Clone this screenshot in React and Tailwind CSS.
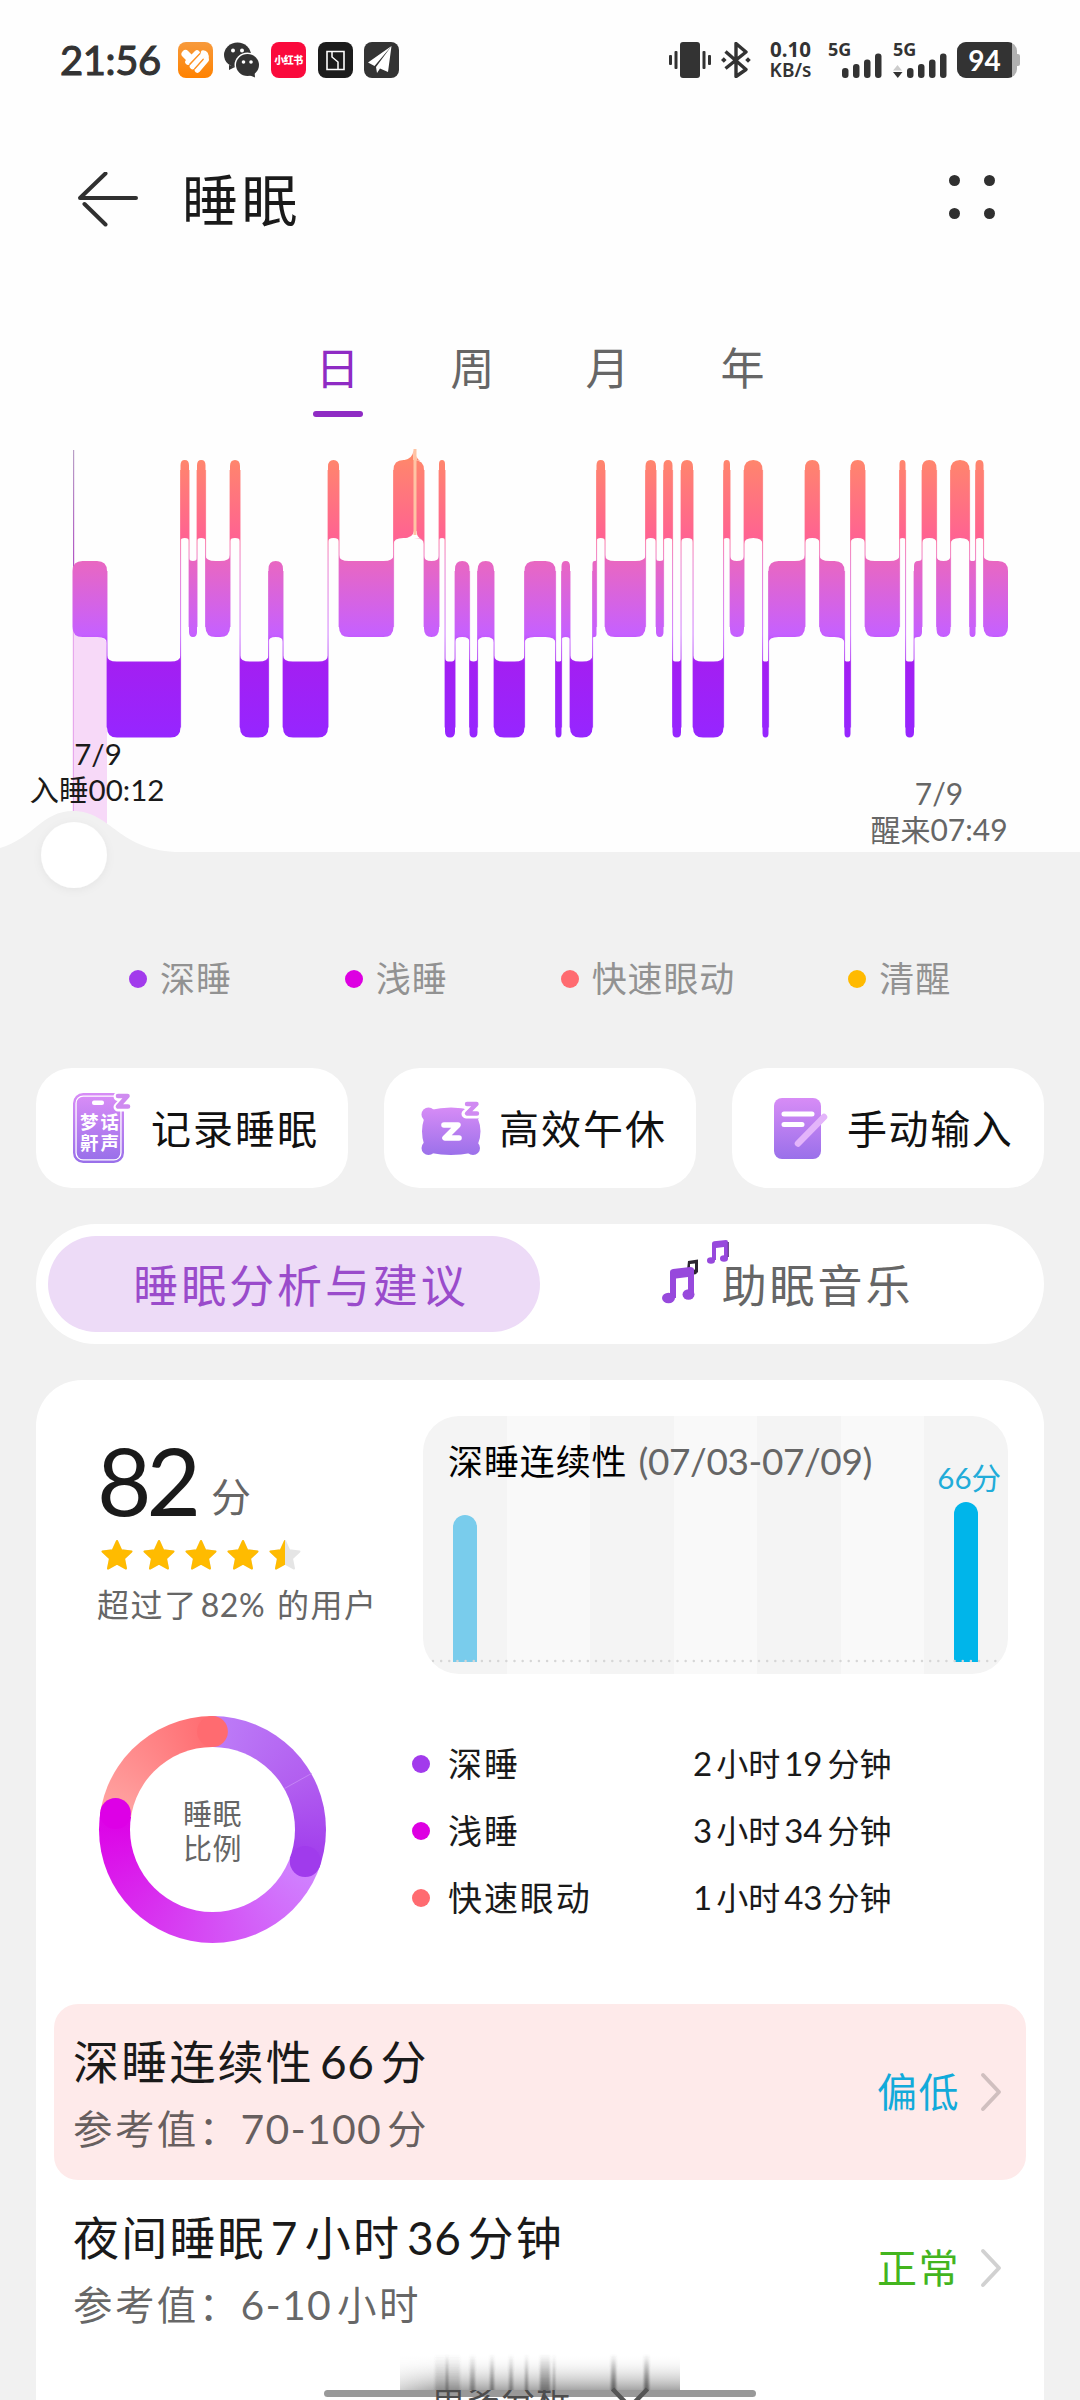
import React, { useState } from 'react';

const STAGES = {
  rem: { top: 460, bottom: 538, level: 2 },
  light: { top: 561, bottom: 637, level: 1 },
  deep: { top: 661.5, bottom: 737.5, level: 0 },
};

// [stage, end x], every block starts where the previous one ends
const SLEEP = [
  ['light', 107], ['deep', 180.5], ['rem', 189], ['light', 197], ['rem', 205.5],
  ['light', 230], ['rem', 240], ['deep', 268.5], ['light', 283], ['deep', 328],
  ['rem', 339], ['light', 393.5], ['rem', 424], ['light', 439], ['rem', 445],
  ['deep', 455], ['light', 469.5], ['deep', 477.5], ['light', 494], ['deep', 524.5],
  ['light', 555.5], ['deep', 561.5], ['light', 570], ['deep', 592.5], ['light', 596.5],
  ['rem', 605], ['light', 645.5], ['rem', 656], ['light', 663.5], ['rem', 672.5],
  ['deep', 681], ['rem', 693], ['deep', 723.5], ['rem', 730], ['light', 744],
  ['rem', 762.5], ['deep', 768.5], ['light', 805], ['rem', 819.5], ['light', 844.5],
  ['deep', 850.5], ['rem', 865], ['light', 899.5], ['rem', 905.5], ['deep', 914],
  ['light', 922], ['rem', 936.5], ['light', 950.5], ['rem', 969.5], ['light', 975.5],
  ['rem', 983.5], ['light', 1008],
];

const BLOCKS = SLEEP.map(([stage, x1], i) => ({
  stage,
  x0: i === 0 ? 72.5 : SLEEP[i - 1][1],
  x1,
  prev: i === 0 ? null : SLEEP[i - 1][0],
  next: i === SLEEP.length - 1 ? null : SLEEP[i + 1][0],
}));

function blockPath({ stage, x0, x1, prev, next }) {
  const { top, bottom, level } = STAGES[stage];
  const rx = Math.min(10, (x1 - x0) / 2);
  const ry = Math.min(10, (x1 - x0) / 2 + 1);
  const flare = Math.min(6, (x1 - x0) / 3);
  const side = (other) => (other ? Math.sign(STAGES[other].level - level) : 0);
  const l = side(prev);
  const r = side(next);
  const tl = l > 0 ? top - flare : top + ry;
  const tr = r > 0 ? top - flare : top + ry;
  const bl = l < 0 ? bottom + flare : bottom - ry;
  const br = r < 0 ? bottom + flare : bottom - ry;
  return `M${x0} ${tl}Q${x0} ${top} ${x0 + rx} ${top}H${x1 - rx}Q${x1} ${top} ${x1} ${tr}V${br}Q${x1} ${bottom} ${x1 - rx} ${bottom}H${x0 + rx}Q${x0} ${bottom} ${x0} ${bl}Z`;
}

const LEGEND = [
  { name: '深睡', dot: 'bg-[#a23bec]' },
  { name: '浅睡', dot: 'bg-[#dd00e2]' },
  { name: '快速眼动', dot: 'bg-[#ff6b70]' },
  { name: '清醒', dot: 'bg-[#ffba00]' },
];

const DURATIONS = [
  { name: '深睡', dot: 'bg-[#a23bec]', hours: 2, minutes: 19 },
  { name: '浅睡', dot: 'bg-[#dd00e2]', hours: 3, minutes: 34 },
  { name: '快速眼动', dot: 'bg-[#ff6b70]', hours: 1, minutes: 43 },
];

function SignalBars() {
  return (
    <g fill="#333">
      <rect x="14" y="26" width="6.5" height="10" rx="3" />
      <rect x="25" y="22" width="6.5" height="14" rx="3" />
      <rect x="36" y="17.5" width="6.5" height="18.5" rx="3" />
      <rect x="47" y="11.5" width="6.5" height="24.5" rx="3" />
    </g>
  );
}

function StatusBar() {
  return (
    <div className="flex h-[120px] items-center justify-between pl-[60px] pr-[60px] text-[#333]">
      <div className="flex items-center gap-[11.7px]">
        <span className="mr-[4px] w-[102px] text-[40px] leading-none tracking-[-0.4px] whitespace-nowrap [-webkit-text-stroke:1.1px_#333]">21:56</span>
        <svg width="35" height="36" viewBox="0 0 35 36">
          <defs>
            <linearGradient id="app" x1="0" y1="0" x2="0" y2="1">
              <stop offset="0" stopColor="#f79a3c" />
              <stop offset="1" stopColor="#ff8200" />
            </linearGradient>
          </defs>
          <rect width="35" height="36" rx="8" fill="url(#app)" />
          <g stroke="#fff" strokeWidth="5.6" strokeLinecap="round" strokeLinejoin="round" fill="none">
            <path d="M7.500 12L11 15.500" strokeWidth="8" />
            <path d="M10 20L19 11" />
            <path d="M14.500 24.500L25 13" />
            <path d="M19.500 28L28 18" />
            <path d="M25 10.500Q29 11 28.500 17" strokeWidth="4.500" />
          </g>
          <path d="M11.500 22.500L22 11.500M16.500 27L25.500 17" stroke="#ff9020" strokeWidth="1.300" />
        </svg>
        <svg width="35" height="36" viewBox="0 0 35 36">
          <path d="M5 23l0 5 6-3z" fill="#333" />
          <ellipse cx="13.500" cy="13" rx="13.500" ry="12.500" fill="#333" />
          <circle cx="9" cy="8.500" r="2" fill="#fff" />
          <circle cx="18" cy="8.500" r="2" fill="#fff" />
          <ellipse cx="23.500" cy="23" rx="13" ry="12.500" fill="#fff" />
          <ellipse cx="23.500" cy="23" rx="11.500" ry="11" fill="#333" />
          <path d="M25 33l6 2.500-.5-6z" fill="#333" />
          <circle cx="19.500" cy="20" r="1.800" fill="#fff" />
          <circle cx="27" cy="20" r="1.800" fill="#fff" />
        </svg>
        <div className="flex h-[36px] w-[35px] items-center justify-center rounded-[8px] bg-[#fa0a3c]">
          <span className="text-[10px] leading-none font-black tracking-[-0.5px] whitespace-nowrap text-white">小红书</span>
        </div>
        <svg width="35" height="36" viewBox="0 0 35 36" fill="none">
          <rect width="35" height="36" rx="8" fill="#1c1c1c" />
          <path d="M9 9.500h17v18H9z" stroke="#fff" strokeWidth="1.600" />
          <path d="M14 9.500v5.500l6 5v7.500" stroke="#fff" strokeWidth="1.500" />
        </svg>
        <svg width="35" height="36" viewBox="0 0 35 36">
          <rect width="35" height="36" rx="8" fill="#333" />
          <path d="M27.500 4L4 20.500l6.500 3.500zM27.500 4L12 25l1 6 3-4.500 8 3.500z" fill="#fff" />
        </svg>
      </div>

      <div className="flex items-center">
        <svg width="42" height="36" viewBox="0 0 42 36" fill="#333">
          <rect x="11" width="20" height="36" rx="3" />
          <rect x="5.500" y="9" width="3" height="18" rx="1" />
          <rect y="13" width="3" height="10" rx="1" />
          <rect x="33.500" y="9" width="3" height="18" rx="1" />
          <rect x="39" y="13" width="3" height="10" rx="1" />
        </svg>
        <svg className="ml-[10px]" width="30" height="36" viewBox="0 0 30 36" fill="none" stroke="#333" strokeWidth="3.400">
          <path d="M4.500 9.500L25 27.500 15 34.500V1.500L25 10 4.500 26.500" strokeLinejoin="round" />
          <path d="M2.800 15.200l2.800 2.800-2.800 2.800-2.800-2.800zM27 15.200l2.800 2.800-2.800 2.800-2.800-2.800z" fill="#333" stroke="none" />
        </svg>
        <div className="ml-[18px] flex w-[43px] flex-col items-center [font-family:'Noto_Sans',sans-serif]">
          <span className="text-[20.5px] leading-[21px] font-bold">0.10</span>
          <span className="text-[19px] leading-[21px] font-semibold">KB/s</span>
        </div>
        <div className="relative ml-[16px] h-[36px] w-[54px]">
          <svg width="54" height="36" viewBox="0 0 54 36"><SignalBars /></svg>
          <span className="absolute -top-[2px] left-0 text-[18px] leading-[18px] font-bold [font-family:'Noto_Sans',sans-serif]">5G</span>
        </div>
        <div className="relative ml-[11px] h-[36px] w-[54px]">
          <svg width="54" height="36" viewBox="0 0 54 36">
            <SignalBars />
            <path d="M4.500 23l4.500 5.500h-9z" fill="#ccc" />
            <path d="M0 30h9.500l-4.700 6z" fill="#333" />
          </svg>
          <span className="absolute -top-[2px] left-0 text-[18px] leading-[18px] font-bold [font-family:'Noto_Sans',sans-serif]">5G</span>
        </div>
        <div className="ml-[10px] flex items-center">
          <div className="flex h-[36px] w-[60px] overflow-hidden rounded-[9px] bg-[#b0b0b0]">
            <span className="w-[55px] bg-[#333] text-center text-[28px] leading-[36px] font-bold text-white">94</span>
          </div>
          <div className="h-[12px] w-[3px] rounded-r-[2px] bg-[#b0b0b0]" />
        </div>
      </div>
    </div>
  );
}

function Header() {
  return (
    <div className="flex h-[160px] items-center pl-[77px] pr-[85px]">
      <svg width="62" height="56" viewBox="0 0 62 56" fill="none" stroke="#303030" strokeWidth="4" strokeLinecap="round" strokeLinejoin="round">
        <path d="M59 26H3L28.500 1.500M7.500 32L28.500 52.500" />
      </svg>
      <h1 className="ml-[43px] text-[56px] leading-none tracking-[3.500px] text-[#1a1a1a]">睡眠</h1>
      <div className="ml-auto grid grid-cols-2 gap-x-[24px] gap-y-[22px] pb-[6px]">
        {[0, 1, 2, 3].map((n) => (
          <i key={n} className="size-[11px] rounded-full bg-[#303030]" />
        ))}
      </div>
    </div>
  );
}

function PeriodTabs() {
  const [active, setActive] = useState('日');
  return (
    <div className="flex h-[160px] justify-center pt-[63px]">
      {['日', '周', '月', '年'].map((tab) => (
        <button
          key={tab}
          onClick={() => setActive(tab)}
          className={`flex w-[135px] flex-col items-center text-[44px] leading-[50px] ${active === tab ? 'text-[#8f2bc4]' : 'text-[#666]'}`}
        >
          {tab}
          {active === tab && <i className="mt-[18px] h-[6px] w-[50px] rounded-full bg-[#8f2bc4]" />}
        </button>
      ))}
    </div>
  );
}

function SleepChart() {
  return (
    <div className="relative h-[460px]">
      <svg width="1080" height="460" viewBox="0 440 1080 460">
        <defs>
          <linearGradient id="stage" gradientUnits="userSpaceOnUse" x1="0" y1="450" x2="0" y2="738">
            <stop offset="0" stopColor="#ff8a68" />
            <stop offset="0.300" stopColor="#ff6391" />
            <stop offset="0.390" stopColor="#e867c2" />
            <stop offset="0.640" stopColor="#c660ff" />
            <stop offset="0.740" stopColor="#a31ff2" />
            <stop offset="1" stopColor="#9626ff" />
          </linearGradient>
          <linearGradient id="cursor" x1="0" y1="0" x2="0" y2="1">
            <stop offset="0" stopColor="#b9a0c6" />
            <stop offset="1" stopColor="#b04fc4" />
          </linearGradient>
          <filter id="knob" x="-30%" y="-30%" width="160%" height="160%">
            <feDropShadow dx="0" dy="2" stdDeviation="4" floodOpacity="0.050" />
          </filter>
        </defs>
        <path d="M72.500 628L82 637H96q11 0 11 8v200H72.500z" fill="#f7d9f8" />
        <rect x="73" y="450" width="1.200" height="120" fill="url(#cursor)" />
        <rect x="73" y="630" width="1" height="190" fill="#e6a8ec" />
        {BLOCKS.map((b) => (
          <path key={b.x0} d={blockPath(b)} fill="url(#stage)" />
        ))}
        {BLOCKS.slice(1).map((b) => {
          const top = Math.min(STAGES[b.stage].top, STAGES[b.prev].top) + 10;
          const bottom = Math.max(STAGES[b.stage].bottom, STAGES[b.prev].bottom) - 10;
          return <rect key={b.x0} x={b.x0 - 0.5} y={top} width="1.100" height={bottom - top} fill="url(#stage)" opacity="0.750" />;
        })}
        {/* short wake-up inside a REM block */}
        <path d="M403 460.500Q413 459 413.500 450V461zM416.500 456q1 4 4 4.500h-4z" fill="#ff8668" />
        <path d="M403 538.500Q413 538 414 531H416.500Q417 538 421 538.500z" fill="#fff" />
        <rect x="413.500" y="449" width="3" height="86" fill="#ffc4a4" />
        <path d="M0 848C34 838 42 811 73 811C112 811 118 852 181 852H1080V900H0z" fill="#f1f1f1" />
        <circle cx="74" cy="855" r="33" fill="#fff" filter="url(#knob)" />
      </svg>
      <div className="absolute left-[31px] top-[296px] w-[134px] text-center text-[29.5px] leading-[36px] whitespace-nowrap text-[#1a1a1a]">
        <p>7/9</p>
        <p className="-ml-[2px]">入睡00:12</p>
      </div>
      <div className="absolute left-[869px] top-[335px] w-[140px] text-center text-[30px] leading-[36px] whitespace-nowrap text-[#666]">
        <p>7/9</p>
        <p>醒来07:49</p>
      </div>
    </div>
  );
}

function Legend() {
  return (
    <div className="flex h-[168px] items-center gap-[113px] pb-[11px] pl-[129px]">
      {LEGEND.map((item) => (
        <div key={item.name} className="flex items-center gap-[13px] text-[35px] leading-none tracking-[0.900px] whitespace-nowrap text-[#929292]">
          <i className={`size-[18px] rounded-full ${item.dot}`} />
          {item.name}
        </div>
      ))}
    </div>
  );
}

function PurpleFade({ id }) {
  return (
    <linearGradient id={id} x1="0" y1="0" x2="0" y2="1">
      <stop offset="0" stopColor="#d78cf6" />
      <stop offset="1" stopColor="#9a70ea" />
    </linearGradient>
  );
}

function RecordIcon() {
  return (
    <div className="relative h-[70px] w-[58px]">
      <svg width="58" height="70" viewBox="0 0 58 70" fill="none">
        <defs><PurpleFade id="rec" /></defs>
        <rect x="1.200" y="1.200" width="48.600" height="67.600" rx="9" fill="#fff" stroke="url(#rec)" strokeWidth="2.400" />
        <rect x="3.700" y="3.700" width="43.600" height="62.600" rx="6.500" fill="url(#rec)" />
        <rect x="19" y="7.500" width="12" height="4.500" rx="2" fill="#fff" />
        <path d="M45 3.500h10L45 14h10" stroke="#fff" strokeWidth="9" strokeLinejoin="round" strokeLinecap="round" />
        <path d="M45 3h9.500L45 13.500h10" stroke="#cf8bf0" strokeWidth="4.600" strokeLinejoin="round" strokeLinecap="round" />
      </svg>
      <div className="absolute left-[7px] top-[19px] w-[40px] text-[18.5px] leading-[21px] font-bold text-white">
        <p>梦话</p>
        <p>鼾声</p>
      </div>
    </div>
  );
}

function NapIcon() {
  return (
    <svg width="61" height="55" viewBox="0 0 61 55" fill="none">
      <defs>
        <linearGradient id="nap" gradientUnits="userSpaceOnUse" x1="0" y1="6" x2="0" y2="55">
          <stop offset="0" stopColor="#d78cf6" />
          <stop offset="1" stopColor="#9a70ea" />
        </linearGradient>
      </defs>
      <g fill="url(#nap)">
        <circle cx="7.500" cy="13.500" r="7" />
        <circle cx="52" cy="13.500" r="7" />
        <circle cx="7.500" cy="47" r="7" />
        <circle cx="52" cy="47" r="7" />
        <path d="M9 9Q30 4 51 9Q55 11 57 18Q62 30 57 43Q55 50 50 52Q30 56 10 52Q5 50 3 43Q-1 30 3 18Q5 11 9 9z" />
      </g>
      <path d="M23 24h14L24 37h14" stroke="#fff" strokeWidth="5.600" strokeLinejoin="round" strokeLinecap="round" />
      <path d="M46 4h10L45 13h11" stroke="#fff" strokeWidth="9" strokeLinejoin="round" strokeLinecap="round" />
      <path d="M46 3h9.500L46 12.500h10" stroke="#d08af2" strokeWidth="4.400" strokeLinejoin="round" strokeLinecap="round" />
    </svg>
  );
}

function NoteIcon() {
  return (
    <svg width="54" height="61" viewBox="0 0 54 61" fill="none">
      <defs><PurpleFade id="note" /></defs>
      <rect width="47" height="61" rx="8" fill="url(#note)" />
      <path d="M10 16h28M10 26.500h18" stroke="#fff" strokeWidth="5" strokeLinecap="round" />
      <path d="M24 45.500L50 19" stroke="#e3b4fa" strokeWidth="6.500" strokeLinecap="round" />
    </svg>
  );
}

function ActionButtons() {
  return (
    <div className="mx-[36px] grid grid-cols-3 gap-[36px] text-[40px] leading-none tracking-[2px] whitespace-nowrap text-[#111]">
      <button className="flex h-[120px] items-center rounded-[36px] bg-white pl-[37px]">
        <RecordIcon />
        <span className="ml-[20px] pt-[2px]">记录睡眠</span>
      </button>
      <button className="flex h-[120px] items-center rounded-[36px] bg-white pl-[37px]">
        <NapIcon />
        <span className="ml-[17px] pt-[2px]">高效午休</span>
      </button>
      <button className="flex h-[120px] items-center rounded-[36px] bg-white pl-[42px]">
        <NoteIcon />
        <span className="ml-[19px] pt-[2px] tracking-[1.6px]">手动输入</span>
      </button>
    </div>
  );
}

function MusicIcon() {
  return (
    <svg className="-mr-[8px] mb-[26px]" width="68" height="66" viewBox="0 0 68 66">
      <path d="M26 21l10-1.500v13h-3v-9l-5 .5v6h-3z" fill="#2b2530" />
      <ellipse cx="32" cy="32" rx="3" ry="2.500" fill="#2b2530" />
      <g fill="#9749dc">
        <path d="M8 32Q8 29.500 11 29L28 27Q32 27 32 30V54H26V37L14 38.500V58H8z" />
        <ellipse cx="6.500" cy="58" rx="6.500" ry="5.200" />
        <ellipse cx="26.500" cy="54.500" rx="6" ry="5.200" />
        <path d="M50 3.500Q50 1.500 52 1.200L64 0Q66 0 66 2V18H62V7L54 8V20H50z" />
        <ellipse cx="49" cy="20.500" rx="4" ry="3.300" />
        <ellipse cx="62" cy="18.500" rx="4" ry="3.300" />
      </g>
      <path d="M66.300 2V17" stroke="#4a2370" strokeWidth="1" />
    </svg>
  );
}

function Segmented() {
  return (
    <div className="mx-[36px] mt-[36px] flex h-[120px] shrink-0 rounded-full bg-white p-[12px] text-[45px] leading-none tracking-[2.9px] whitespace-nowrap">
      <button className="flex w-[492px] items-center justify-center rounded-full bg-[#eddbf7] pl-[14px] pt-[4px] text-[#9a4bcb]">睡眠分析与建议</button>
      <button className="flex flex-1 items-center justify-center pl-[3px] pt-[4px] text-[#666]">
        <MusicIcon />
        助眠音乐
      </button>
    </div>
  );
}

const STAR = 'M16 2L20.300 11.300 30.500 12.500 23 19.500 25 29.500 16 24.600 7 29.500 9 19.500 1.500 12.500 11.700 11.300z';

function Stars() {
  return (
    <div className="mt-[17px] ml-[4px] flex gap-[10px]">
      {[1, 1, 1, 1, 0.5].map((fill, i) => (
        <svg key={i} width="32" height="32" viewBox="0 0 32 32" strokeLinejoin="round" strokeWidth="2">
          <defs>
            <clipPath id={`star${i}`}><rect width={32 * fill} height="32" /></clipPath>
          </defs>
          <path d={STAR} fill="#e5e5e5" stroke="#e5e5e5" />
          <path d={STAR} fill="#ffbb00" stroke="#ffbb00" clipPath={`url(#star${i})`} />
        </svg>
      ))}
    </div>
  );
}

function ContinuityChart() {
  return (
    <div className="relative h-[258px] w-[585px] overflow-hidden rounded-[36px]">
      <div className="grid h-full grid-cols-7">
        {[0, 1, 2, 3, 4, 5, 6].map((day) => (
          <div key={day} className={`flex items-end justify-center pb-[12px] ${day % 2 ? 'bg-[#f9f9f9]' : 'bg-[#f4f4f4]'}`}>
            {day === 0 && <i className="h-[147px] w-[24px] rounded-t-full bg-[#79ccec]" />}
            {day === 6 && <i className="h-[160px] w-[24px] rounded-t-full bg-[#00b5ea]" />}
          </div>
        ))}
      </div>
      <svg className="absolute left-[8px] top-[243px]" width="570" height="4">
        <path d="M2 2H568" stroke="#d6d6d6" strokeWidth="2.500" strokeDasharray="0 8.150" strokeLinecap="round" />
      </svg>
      <p className="absolute left-[25px] top-[24px] text-[35px] leading-[42px] tracking-[0.900px] whitespace-nowrap text-black">
        深睡连续性
        <span className="ml-[11px] text-[37px] tracking-[-0.400px] text-[#666]">(07/03-07/09)</span>
      </p>
      <span className="absolute right-[7px] top-[45px] text-[29.500px] leading-[34px] text-[#22acd9]">66分</span>
    </div>
  );
}

function Donut() {
  return (
    <div className="relative flex size-[227px] items-center justify-center rounded-full bg-[conic-gradient(#bd7df8_0deg,#b25ff0_60deg,#a03bec_110deg,#cf85ff_110deg,#dd00e6_279deg,#ffa5a3_279deg,#ff6b70_360deg)]">
      <svg className="absolute inset-0" width="227" height="227" viewBox="-113.500 -113.500 227 227">
        <circle cx="0" cy="-98" r="15.400" fill="#ff6b70" />
        <circle cx="92.700" cy="32" r="15.400" fill="#a03bec" />
        <circle cx="-97" cy="-16" r="15.400" fill="#dd00e6" />
        <path d="M72 -41L99 -56" stroke="#c583f5" strokeWidth="1" />
      </svg>
      <div className="z-10 flex size-[165px] flex-col items-center justify-center rounded-full bg-white pt-[2px] text-[29px] leading-[35px] tracking-[0.500px] text-[#666]">
        <span>睡眠</span>
        <span>比例</span>
      </div>
    </div>
  );
}

function Chevron() {
  return (
    <svg width="22" height="40" viewBox="0 0 22 40" fill="none" stroke="#000" strokeOpacity="0.180" strokeWidth="4" strokeLinecap="round" strokeLinejoin="round">
      <path d="M3 3L19 20 3 37" />
    </svg>
  );
}

function MetricRow({ title, range, status, tone, highlight }) {
  return (
    <div className={`mx-[18px] flex h-[176px] items-center rounded-[24px] pl-[19px] pr-[24px] ${highlight ? 'bg-[#feeaea]' : ''}`}>
      <div className="pt-[6px] whitespace-nowrap">
        <p className="text-[46px] leading-[60px] tracking-[2.200px] text-[#1a1a1a]">{title}</p>
        <p className="mt-[7px] text-[39.500px] leading-[60px] tracking-[2.400px] text-black/60">{range}</p>
      </div>
      <span className={`ml-auto mr-[20px] text-[40px] leading-none tracking-[1.5px] ${tone}`}>{status}</span>
      <Chevron />
    </div>
  );
}

function Num({ children, className = 'mx-[6px] tracking-[0.500px]' }) {
  return <span className={className}>{children}</span>;
}

function ReportCard() {
  return (
    <div className="mx-[36px] mt-[36px] h-[1020px] shrink-0 rounded-t-[46px] bg-white pt-[36px]">
      <div className="flex pl-[61px] pr-[36px]">
        <div className="w-[326px] pt-[22px]">
          <p className="flex h-[84px] items-end text-[#1a1a1a]">
            <span className="text-[94px] leading-[84px] tracking-[-5px]">82</span>
            <span className="mb-[5px] ml-[15px] text-[40px] leading-[40px] text-[#666]">分</span>
          </p>
          <Stars />
          <p className="mt-[14px] text-[32px] leading-[40px] tracking-[1.600px] whitespace-nowrap text-[#666]">
            超过了<Num className="mr-[2px] ml-[3px] tracking-[0.500px]">82%</Num> 的用户
          </p>
        </div>
        <ContinuityChart />
      </div>

      <div className="mt-[42px] flex items-center pl-[63px]">
        <Donut />
        <div className="ml-[86px] flex flex-col pt-[2px] text-[34px] leading-[66px] text-[#1a1a1a]">
          {DURATIONS.map((d) => (
            <div key={d.name} className="flex items-center whitespace-nowrap">
              <i className={`size-[18px] rounded-full ${d.dot}`} />
              <span className="ml-[18px] w-[245px] tracking-[1.900px]">{d.name}</span>
              <span className="text-[33px]">
                {d.hours}
                <span className="mr-[4px] ml-[4px] text-[32px]">小时</span>
                {d.minutes}
                <span className="ml-[5px] text-[32px]">分钟</span>
              </span>
            </div>
          ))}
        </div>
      </div>

      <div className="mt-[61px]">
        <MetricRow
          highlight
          title={<>深睡连续性<Num>66</Num>分</>}
          range={<>参考值：<Num className="mr-[5px] text-[41px] tracking-[1.200px]">70-100</Num>分</>}
          status="偏低"
          tone="text-[#12aada]"
        />
        <MetricRow
          title={<>夜间睡眠<Num className="mx-[5px]">7</Num>小时<Num>36</Num>分钟</>}
          range={<>参考值：<Num className="mr-[5px] text-[41px] tracking-[1.200px]">6-10</Num>小时</>}
          status="正常"
          tone="text-[#43b51e]"
        />
      </div>
    </div>
  );
}

// System gesture bar with the content that fades out under it
function GestureBar() {
  return (
    <div className="absolute bottom-0 left-[324px] h-[46px] w-[432px] overflow-hidden">
      <svg className="absolute inset-0" width="432" height="46" viewBox="324 2354 432 46">
        <defs>
          <linearGradient id="veil" x1="0" y1="0" x2="0" y2="1">
            <stop offset="0" stopColor="#fff" stopOpacity="0" />
            <stop offset="1" stopColor="#a0a0a0" />
          </linearGradient>
          <linearGradient id="streak" x1="0" y1="0" x2="0" y2="1">
            <stop offset="0" stopColor="#555" stopOpacity="0" />
            <stop offset="1" stopColor="#555" stopOpacity="0.850" />
          </linearGradient>
          <linearGradient id="edge" x1="0" y1="0" x2="1" y2="0">
            <stop offset="0" stopColor="#fff" stopOpacity="0.500" />
            <stop offset="1" stopColor="#fff" stopOpacity="0" />
          </linearGradient>
          <filter id="soft"><feGaussianBlur stdDeviation="1 0" /></filter>
        </defs>
        <rect x="400" y="2354" width="280" height="37" fill="url(#veil)" />
        <rect x="400" y="2354" width="40" height="37" fill="url(#edge)" />
        <g fill="url(#streak)" filter="url(#soft)">
          <rect x="435" y="2354" width="25" height="37" opacity="0.350" />
          <rect x="446" y="2354" width="2" height="37" />
          <rect x="470" y="2354" width="5" height="37" opacity="0.700" />
          <rect x="490" y="2354" width="4" height="37" opacity="0.800" />
          <rect x="509" y="2354" width="4" height="37" opacity="0.700" />
          <rect x="525" y="2354" width="3" height="37" opacity="0.800" />
          <rect x="540" y="2354" width="10" height="37" opacity="0.800" />
          <rect x="553" y="2354" width="2" height="37" opacity="0.800" />
          <rect x="611" y="2354" width="5" height="37" />
          <rect x="644" y="2354" width="5" height="37" />
        </g>
        <rect x="324" y="2390" width="432" height="7" rx="3.500" fill="#999" />
        <path d="M612.500 2389L630 2407L647.500 2389" fill="none" stroke="#555" strokeWidth="4.500" />
      </svg>
      <div className="absolute left-[107px] top-[36px] h-[20px] overflow-hidden">
        <p className="-mt-[9px] text-[34px] leading-[36px] tracking-[1px] text-[#4d4d4d]">更多分析</p>
      </div>
    </div>
  );
}

export default function App() {
  return (
    <div className="relative flex h-[2400px] w-[1080px] flex-col overflow-hidden bg-[#f1f1f1] [font-family:Lato,'Noto_Sans_CJK_SC',sans-serif]">
      <div className="bg-[#fefefe]">
        <StatusBar />
        <Header />
        <PeriodTabs />
        <SleepChart />
      </div>
      <Legend />
      <ActionButtons />
      <Segmented />
      <ReportCard />
      <GestureBar />
    </div>
  );
}
